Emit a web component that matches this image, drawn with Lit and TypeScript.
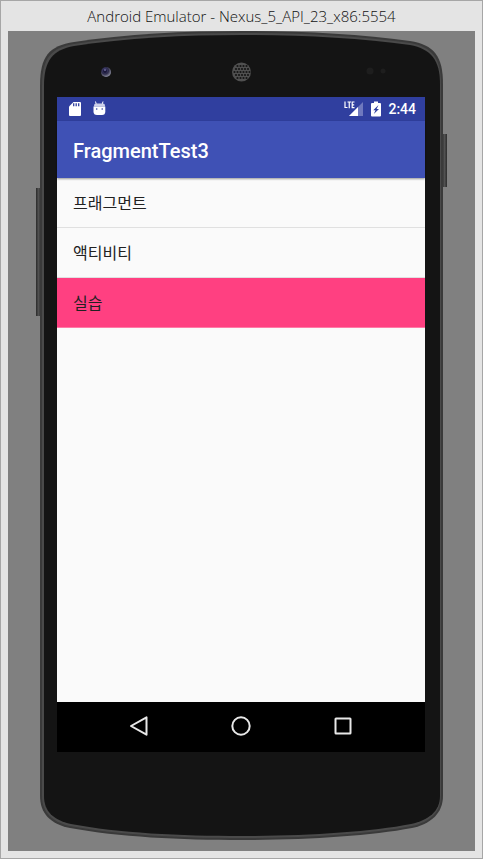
import { LitElement, html, css, svg } from "lit";
import { customElement, state } from "lit/decorators.js";

const BODY =
  "M40 86 C40 56 49 46 74 42 C125 34 185 31 242 31 C300 31 360 34 410 41 C434 45 443 56 443 84 V796 C443 813 431 824 412 828 C370 836 305 840 242 840 C180 840 118 837 70 828 C50 824 40 813 40 796 Z";
const RIM =
  "M42 86 C42 58 51 48 74 44 C125 36 185 33 242 33 C300 33 360 36 410 43 C432 47 441 58 441 84 V796 C441 812 430 822 412 826 C370 834 305 838 242 838 C180 838 118 835 70 826 C52 822 42 812 42 796 Z";
const FACE =
  "M44 86 C44 60 53 50 74 46 C125 38 185 35 242 35 C300 35 360 38 410 45 C431 49 440 60 440 84 V796 C440 811 429 820 411 824 C370 832 305 836 242 836 C180 836 118 833 71 824 C53 820 44 811 44 796 Z";

@customElement("phone-shell")
export class PhoneShell extends LitElement {
  static styles = css`
    :host {
      display: block;
    }
    .art {
      display: block;
      width: 100%;
      height: 100%;
    }
  `;

  render() {
    const holes = [];
    for (let row = 0; row < 7; row++) {
      for (let col = 0; col < 7; col++) {
        const x = 233 + col * 3 + (row % 2) * 1.5;
        const y = 63 + row * 3;
        if (Math.hypot(x - 241.5, y - 72) < 8.5) {
          holes.push(svg`<circle cx=${x} cy=${y} r="1.1" fill="#161616" />`);
        }
      }
    }
    return html`
      <svg class="art" viewBox="36 31 411 810" preserveAspectRatio="none" aria-hidden="true">
        <defs>
          <linearGradient id="key" x1="0" x2="1" y1="0" y2="0">
            <stop offset="0" stop-color="#2a2a2a" />
            <stop offset="0.5" stop-color="#515151" />
            <stop offset="1" stop-color="#2c2c2c" />
          </linearGradient>
          <radialGradient id="lens" cx="0.4" cy="0.35" r="0.7">
            <stop offset="0" stop-color="#4c4a8a" />
            <stop offset="0.5" stop-color="#2c2a48" />
            <stop offset="1" stop-color="#9a9cac" />
          </radialGradient>
        </defs>
        <rect x="36" y="188" width="5" height="128" fill="url(#key)" />
        <rect x="442" y="134" width="5" height="53" fill="url(#key)" />
        <path d=${BODY} fill="#3a3a3a" />
        <path d=${RIM} fill="#4a4a4a" />
        <path d=${FACE} fill="#141414" />
        <circle cx="106" cy="72" r="5" fill="url(#lens)" />
        <circle cx="105" cy="71" r="2" fill="#1b1838" />
        <circle cx="105" cy="70" r="0.8" fill="#a5a3dc" />
        <circle cx="241.5" cy="72" r="9.5" fill="#505050" />
        ${holes}
        <circle cx="370" cy="71" r="3.5" fill="#1e1e1e" />
        <circle cx="383" cy="71" r="2.5" fill="#1e1e1e" />
      </svg>
    `;
  }
}

@customElement("app-root")
export class AppRoot extends LitElement {
  static styles = css`
    :host {
      display: block;
      font-family: Roboto, "Noto Sans CJK KR", sans-serif;
    }
    * {
      box-sizing: border-box;
    }
    .window {
      display: flex;
      flex-direction: column;
      min-height: 100vh;
      padding: 0 7px 7px;
      border: 1px solid #a6a6a6;
      background: #e4e4e4;
    }
    .caption {
      margin: 0;
      height: 30px;
      font: 300 15px/30px "Open Sans", sans-serif;
      color: #111;
      text-align: center;
      white-space: nowrap;
    }
    .stage {
      flex: 1;
      display: flex;
      padding: 0 28px 10px;
      background: #808080;
    }
    .phone {
      position: relative;
      flex: 1;
      display: flex;
      padding: 66px 22px 89px 21px;
    }
    .shell {
      position: absolute;
      inset: 0;
    }
    .screen {
      position: relative;
      flex: 1;
      display: flex;
      flex-direction: column;
      background: #fafafa;
    }
    .status {
      display: flex;
      align-items: center;
      height: 24px;
      padding: 0 9px 0 10px;
      background: #303f9f;
      color: #fff;
    }
    .group {
      display: flex;
      align-items: center;
      gap: 8px;
    }
    .group.end {
      margin-left: auto;
      gap: 6px;
    }
    .time {
      font-size: 14px;
      line-height: 24px;
      font-weight: 500;
    }
    .appbar {
      display: flex;
      align-items: center;
      height: 57px;
      padding: 2px 16px 0;
      background: #3f51b5;
      box-shadow: 0 1px 2px rgba(0, 0, 0, 0.4);
    }
    .title {
      margin: 0;
      font-size: 20px;
      line-height: 28px;
      font-weight: 500;
      color: #fff;
    }
    .list {
      flex: 1;
      margin: 0;
      padding: 0;
      list-style: none;
    }
    .row {
      display: block;
      width: 100%;
      height: 50px;
      padding: 0 16px 2px;
      border: 0;
      border-bottom: 1px solid #e0e0e0;
      background: none;
      font: 400 16px/46px "Noto Sans CJK KR", sans-serif;
      color: #212121;
      text-align: left;
    }
    .row.selected {
      background: #ff4081;
      border-bottom-color: #ff7aa6;
    }
    .nav {
      display: flex;
      justify-content: center;
      gap: 54px;
      height: 50px;
      background: #000;
    }
    .key {
      width: 48px;
      padding: 0 0 2px;
      border: 0;
      background: none;
    }
    .icon {
      display: block;
      flex: none;
    }
    .key .icon {
      margin: 0 auto;
    }
  `;

  @state() private selected = 2;

  private items = ["프래그먼트", "액티비티", "실습"];

  render() {
    return html`
      <div class="window">
        <h1 class="caption">Android Emulator - Nexus_5_API_23_x86:5554</h1>
        <div class="stage">
          <div class="phone">
            <phone-shell class="shell"></phone-shell>
            <main class="screen">
              <div class="status">
                <div class="group">
                  <svg class="icon" width="16" height="16" viewBox="0 0 16 16" aria-hidden="true">
                    <path d="M6.5 1H13a1 1 0 0 1 1 1v12a1 1 0 0 1-1 1H3a1 1 0 0 1-1-1V5.500Z" fill="#fff" />
                    <path d="M6.700 2.200v3M9.200 2.200v3M11.700 2.200v3" stroke="#303f9f" stroke-width="1.300" />
                  </svg>
                  <svg class="icon" width="16" height="16" viewBox="0 0 16 16" aria-hidden="true">
                    <path d="M4.500 0.500 5.200 3M12 0.500 11.300 3" stroke="#fff" stroke-width="1" />
                    <path d="M3 4.500Q3 2.500 5 2.500H12Q14 2.500 14 4.500V5.500H3Z" fill="#cdd1ea" />
                    <path d="M2.500 5.500H14.300V10.500Q14.300 14 11 14H6Q2.500 14 2.500 10.500Z" fill="#fff" />
                    <circle cx="5.700" cy="8" r="0.800" fill="#303f9f" />
                    <circle cx="11.200" cy="8" r="0.800" fill="#303f9f" />
                  </svg>
                </div>
                <div class="group end">
                  <svg class="icon" width="20" height="16" viewBox="0 0 20 16" role="img" aria-label="LTE">
                    <path d="M19 1V15H5Z" fill="#6f79be" />
                    <path d="M14 6V15H5Z" fill="#fff" />
                    <path d="M1 0.500V6.500H3.500M3.500 1H7M5.250 1V7.200M10.500 1H8.200V6.600H10.500M8.200 3.800H10.200" fill="none" stroke="#fff" stroke-width="1.200" />
                  </svg>
                  <svg class="icon" width="12" height="16" viewBox="0 0 12 16" aria-hidden="true">
                    <path d="M4 0.500H8V2H10Q11 2 11 3V14.500Q11 15.500 10 15.500H2Q1 15.500 1 14.500V3Q1 2 2 2H4Z" fill="#fff" />
                    <path d="M8.500 4 3.200 9.300H5.500L3.800 13 9 7.900H6.600Z" fill="#303f9f" />
                  </svg>
                  <time class="time">2:44</time>
                </div>
              </div>
              <header class="appbar"><h2 class="title">FragmentTest3</h2></header>
              <ul class="list">
                ${this.items.map(
                  (label, i) => html`<li>
                    <button
                      class="row ${i === this.selected ? "selected" : ""}"
                      @click=${() => (this.selected = i)}
                    >${label}</button>
                  </li>`
                )}
              </ul>
              <nav class="nav">
                <button class="key" aria-label="Back">
                  <svg class="icon" width="24" height="24" viewBox="0 0 24 24">
                    <path d="M19.500 3.300V20.700L4 12Z" fill="none" stroke="#e8e8e8" stroke-width="2" stroke-linejoin="round" />
                  </svg>
                </button>
                <button class="key" aria-label="Home">
                  <svg class="icon" width="24" height="24" viewBox="0 0 24 24">
                    <circle cx="12" cy="12" r="8.700" fill="none" stroke="#e8e8e8" stroke-width="2" />
                  </svg>
                </button>
                <button class="key" aria-label="Overview">
                  <svg class="icon" width="24" height="24" viewBox="0 0 24 24">
                    <rect x="4.500" y="4.500" width="15" height="15" rx="0.500" fill="none" stroke="#e8e8e8" stroke-width="2" />
                  </svg>
                </button>
              </nav>
            </main>
          </div>
        </div>
      </div>
    `;
  }
}
